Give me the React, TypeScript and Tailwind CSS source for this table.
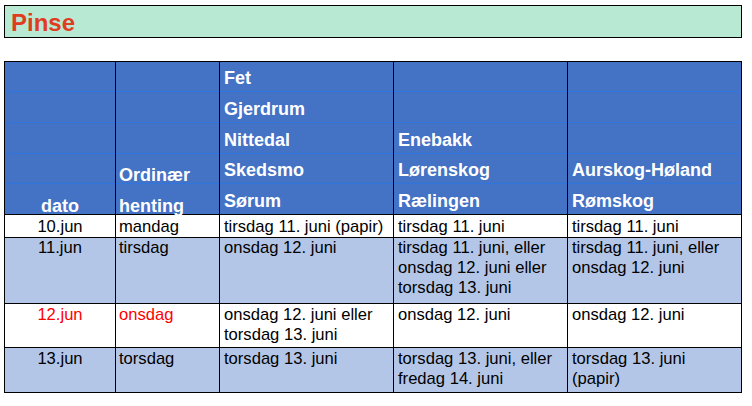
import React from "react";

type Cell = { lines: string[]; red?: boolean };
type Row = { h: string; pt: string; bg: string; cells: Cell[] };

const headerCols: { w: string; items: string[]; side?: boolean; center?: boolean }[] = [
  { w: "w-[111px]", items: ["", "", "", "", "dato"], side: true, center: true },
  { w: "w-[104px]", items: ["", "", "", "Ordinær", "henting"], side: true },
  { w: "w-[174px]", items: ["Fet", "Gjerdrum", "Nittedal", "Skedsmo", "Sørum"] },
  { w: "w-[174px]", items: ["", "", "Enebakk", "Lørenskog", "Rælingen"] },
  { w: "w-[174px]", items: ["", "", "", "Aurskog-Høland", "Rømskog"] },
];

const subHeights = ["h-[30px]", "h-[31px]", "h-[31px]", "h-[30px]", "h-[31px]"];

const colWidths = ["w-[111px]", "w-[104px]", "w-[174px]", "w-[174px]", "w-[174px]"];

const rows: Row[] = [
  {
    h: "h-[23px]",
    pt: "pt-[2px]",
    bg: "bg-white",
    cells: [
      { lines: ["10.jun"] },
      { lines: ["mandag"] },
      { lines: ["tirsdag 11. juni (papir)"] },
      { lines: ["tirsdag 11. juni"] },
      { lines: ["tirsdag 11. juni"] },
    ],
  },
  {
    h: "h-[66px]",
    pt: "pt-[0px]",
    bg: "bg-[#b4c6e7]",
    cells: [
      { lines: ["11.jun"] },
      { lines: ["tirsdag"] },
      { lines: ["onsdag 12. juni"] },
      { lines: ["tirsdag 11. juni, eller", "onsdag 12. juni eller", "torsdag 13. juni"] },
      { lines: ["tirsdag 11. juni, eller", "onsdag 12. juni"] },
    ],
  },
  {
    h: "h-[44px]",
    pt: "pt-[1px]",
    bg: "bg-white",
    cells: [
      { lines: ["12.jun"], red: true },
      { lines: ["onsdag"], red: true },
      { lines: ["onsdag 12. juni eller", "torsdag 13. juni"] },
      { lines: ["onsdag 12. juni"] },
      { lines: ["onsdag 12. juni"] },
    ],
  },
  {
    h: "h-[45px]",
    pt: "pt-[1px]",
    bg: "bg-[#b4c6e7]",
    cells: [
      { lines: ["13.jun"] },
      { lines: ["torsdag"] },
      { lines: ["torsdag 13. juni"] },
      { lines: ["torsdag 13. juni, eller", "fredag 14. juni"] },
      { lines: ["torsdag 13. juni", "(papir)"] },
    ],
  },
];

export default function App() {
  return (
    <div className="w-[752px] h-[406px] bg-white pt-[5px] pl-[4px] font-['Liberation_Sans',Arial,sans-serif]">
      {/* Tittel */}
      <div className="w-[738px] h-[33px] border border-black bg-[#b8e9d2] pl-[6px] pt-[5px]">
        <span className="block text-[24px] leading-[24px] font-bold text-[#e03c1f]">Pinse</span>
      </div>

      {/* Tabell */}
      <div className="mt-[23px] w-[738px] border-l border-t border-black">
        <div className="flex bg-[#4472c4]">
          {headerCols.map((col, ci) => (
            <div key={ci} className={`${col.w} flex flex-col border-r border-black`}>
              {col.items.map((txt, ri) => (
                <div
                  key={ri}
                  className={`${subHeights[ri]} flex items-end ${
                    ri === 4 ? "border-b border-black" : "border-b border-[#2f75de]"
                  } ${col.center ? "justify-center" : col.side ? "pl-[3px]" : "pl-[4px]"} ${
                    col.side ? "pb-0" : "pb-[3px]"
                  }`}
                >
                  <span
                    className={`whitespace-nowrap text-[18px] font-bold text-white ${
                      col.side ? "leading-[16px]" : "leading-[20px]"
                    }`}
                  >
                    {txt}
                  </span>
                </div>
              ))}
            </div>
          ))}
        </div>

        {rows.map((row, ri) => (
          <div key={ri} className={`flex ${row.bg}`}>
            {row.cells.map((cell, ci) => (
              <div
                key={ci}
                className={`${colWidths[ci]} ${row.h} ${row.pt} border-r border-b border-black text-[16.6px] leading-[20px] ${
                  cell.red ? "text-[#ff0000]" : "text-black"
                } ${ci === 0 ? "text-center" : ci === 1 ? "pl-[3px]" : "pl-[4px]"}`}
              >
                {cell.lines.map((l, li) => (
                  <div key={li} className="whitespace-nowrap">
                    {l}
                  </div>
                ))}
              </div>
            ))}
          </div>
        ))}
      </div>
    </div>
  );
}
